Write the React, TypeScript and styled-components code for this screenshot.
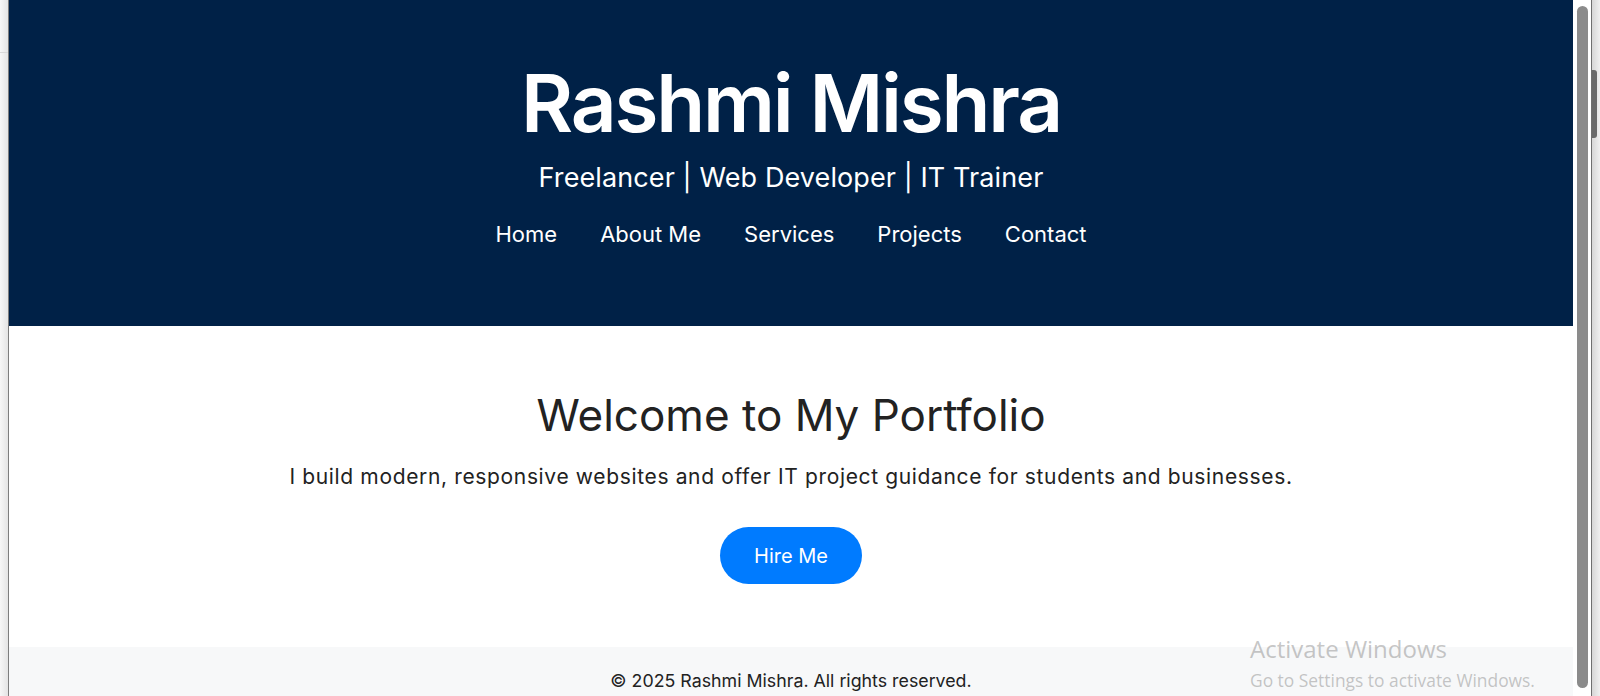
import React from "react";
import styled, { createGlobalStyle } from "styled-components";

const GlobalStyle = createGlobalStyle`
  * { box-sizing: border-box; }
  html, body { margin: 0; padding: 0; height: 100%; overflow: hidden; }
  body { font-family: "Inter", "Noto Sans", sans-serif; background: #ffffff; }
  #root { height: 100%; }
`;

const Frame = styled.div`
  display: flex;
  height: 696px;
  width: 1600px;
  position: relative;
  overflow: hidden;
`;

const LeftEdge = styled.div`
  width: 9px;
  flex: none;
  background: linear-gradient(to right, #f7f7f7, #e4e4e4);
  border-right: 1px solid #7d7d7d;
  display: flex;
  flex-direction: column;
`;

const LeftTab = styled.div`
  height: 53px;
  border-bottom: 1px solid #d9d9d9;
`;

const Page = styled.div`
  flex: 1;
  display: flex;
  flex-direction: column;
  min-width: 0;
`;

const Header = styled.header`
  background: #002147;
  color: #ffffff;
  text-align: center;
  padding: 55px 20px 0;
  height: 326px;
  flex: none;
`;

const Title = styled.h1`
  margin: 0;
  font-size: 80px;
  line-height: 96px;
  font-weight: 600;
  letter-spacing: -2.2px;
`;

const Subtitle = styled.p`
  margin: 7px 0 0;
  font-size: 27px;
  line-height: 39px;
  font-weight: 400;
  letter-spacing: 0.1px;
`;

const Nav = styled.nav`
  margin-top: 21px;
  display: flex;
  justify-content: center;
  gap: 43px;
`;

const NavLink = styled.a`
  color: #ffffff;
  text-decoration: none;
  font-size: 22px;
  line-height: 33px;
  font-weight: 400;
`;

const Main = styled.main`
  flex: none;
  height: 321px;
  padding-top: 63px;
  text-align: center;
  color: #222222;
  display: flex;
  flex-direction: column;
  align-items: center;
`;

const Heading = styled.h2`
  margin: 0;
  font-size: 44px;
  line-height: 52px;
  font-weight: 400;
`;

const Lead = styled.p`
  margin: 21px 0 0;
  font-size: 21px;
  line-height: 30px;
  font-weight: 400;
  letter-spacing: 0.65px;
`;

const HireButton = styled.a`
  margin-top: 35px;
  width: 142px;
  height: 57px;
  border-radius: 29px;
  background: #007bff;
  color: #ffffff;
  font-size: 20px;
  display: flex;
  align-items: center;
  justify-content: center;
  text-decoration: none;
`;

const Footer = styled.footer`
  flex: 1;
  background: #f7f8f9;
  text-align: center;
  padding-top: 21px;
  color: #222222;
  font-size: 17.8px;
  line-height: 25px;
`;

const ScrollTrack = styled.div`
  width: 18px;
  flex: none;
  background: #ffffff;
  padding: 6px 3px 8px 4px;
  display: flex;
`;

const Thumb = styled.div`
  flex: 1;
  background: #8b8b8b;
  border-radius: 6px;
`;

const OuterEdge = styled.div`
  width: 9px;
  flex: none;
  border-left: 1px solid #6f6f6f;
  background: linear-gradient(to right, #d6d6d6, #efefef);
  padding-top: 70px;
`;

const OuterThumb = styled.div`
  width: 5px;
  height: 68px;
  background: #6a6a6a;
  border-radius: 0 3px 3px 0;
`;

const Watermark = styled.div`
  position: absolute;
  left: 1250px;
  top: 634px;
  color: rgba(150, 150, 150, 0.55);
  font-family: "Open Sans", "Noto Sans", sans-serif;
`;

const WatermarkTitle = styled.div`
  font-size: 24px;
  line-height: 30px;
`;

const WatermarkText = styled.div`
  margin-top: 3px;
  font-size: 17.4px;
  line-height: 26px;
`;

const links = ["Home", "About Me", "Services", "Projects", "Contact"];

export default function App() {
  return (
    <>
      <GlobalStyle />
      <Frame>
        <LeftEdge>
          <LeftTab />
        </LeftEdge>
        <Page>
          <Header>
            <Title>Rashmi Mishra</Title>
            <Subtitle>Freelancer | Web Developer | IT Trainer</Subtitle>
            <Nav>
              {links.map((l) => (
                <NavLink key={l} href="#">
                  {l}
                </NavLink>
              ))}
            </Nav>
          </Header>
          <Main>
            <Heading>Welcome to My Portfolio</Heading>
            <Lead>
              I build modern, responsive websites and offer IT project guidance for students and businesses.
            </Lead>
            <HireButton href="#">Hire Me</HireButton>
          </Main>
          <Footer>© 2025 Rashmi Mishra. All rights reserved.</Footer>
        </Page>
        <ScrollTrack>
          <Thumb />
        </ScrollTrack>
        <OuterEdge>
          <OuterThumb />
        </OuterEdge>
        <Watermark>
          <WatermarkTitle>Activate Windows</WatermarkTitle>
          <WatermarkText>Go to Settings to activate Windows.</WatermarkText>
        </Watermark>
      </Frame>
    </>
  );
}
